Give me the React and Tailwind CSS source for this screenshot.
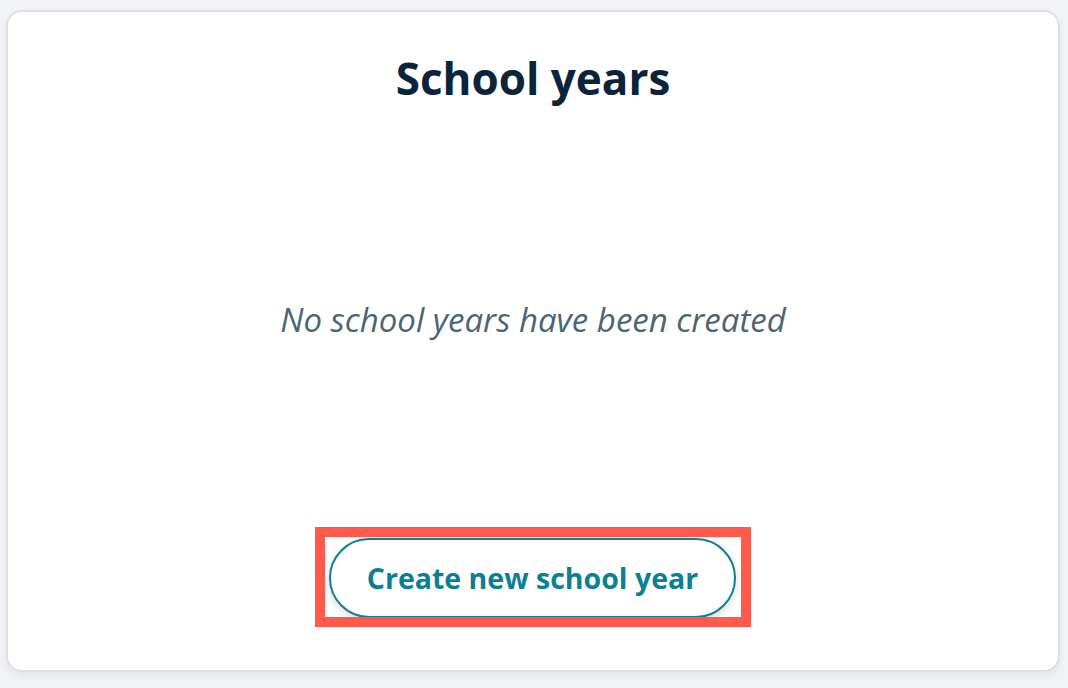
export default function App() {
  return (
    <div className="h-[688px] w-[1068px] bg-[#f2f3f7] pt-[10px] pl-[6px] pr-[8px] pb-[16px] font-['Open_Sans',sans-serif]">
      <div className="flex h-[662px] flex-col items-center rounded-[16px] border-2 border-[#dedfe3] bg-white shadow-[0_4px_8px_rgba(0,0,0,0.06)]">
        <h1 className="mt-[36px] text-[44px] font-bold leading-[60px] text-[#0c2339]">School years</h1>
        <div className="flex flex-1 items-center justify-center pt-[4px]">
          <p className="text-[33px] italic leading-[44px] text-[#4b6577]">No school years have been created</p>
        </div>
        <div className="mb-[43px] flex h-[100px] w-[436px] items-start overflow-hidden border-[10px] border-[#ff5a4b] pl-[4px] pt-[1px]">
          <button className="flex h-[80px] w-[407px] shrink-0 items-center justify-center rounded-full border-2 border-[#0f7f93] bg-white text-[28.5px] font-bold text-[#0b7f95] shadow-[0_3px_8px_rgba(0,0,0,0.15)]">
            Create new school year
          </button>
        </div>
      </div>
    </div>
  );
}
